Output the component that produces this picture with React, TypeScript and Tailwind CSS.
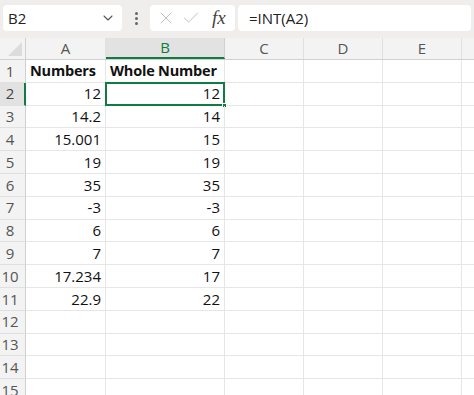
import { ChevronDown, X, Check } from "lucide-react";

const cols = [
  { key: "A", w: "w-[80px]" },
  { key: "B", w: "w-[119px]" },
  { key: "C", w: "w-[79px]" },
  { key: "D", w: "w-[79px]" },
  { key: "E", w: "w-[79px]" },
];

const data: [string, string][] = [
  ["Numbers", "Whole Number"],
  ["12", "12"],
  ["14.2", "14"],
  ["15.001", "15"],
  ["19", "19"],
  ["35", "35"],
  ["-3", "-3"],
  ["6", "6"],
  ["7", "7"],
  ["17.234", "17"],
  ["22.9", "22"],
];

function Toolbar() {
  return (
    <div className="flex h-[38px] items-start gap-[3px] bg-[#efeeed] px-[3px] pt-[5px]">
      <div className="flex h-[26px] w-[119px] items-center justify-between rounded-[4px] bg-white pl-[5px] pr-[6px] text-[15px] text-[#222]">
        <span>B2</span>
        <ChevronDown className="h-4 w-4 text-[#555]" strokeWidth={1.6} />
      </div>
      <div className="flex h-[26px] w-[22px] flex-col items-center justify-center gap-[2px]">
        <span className="h-[3px] w-[3px] rounded-full bg-[#666]" />
        <span className="h-[3px] w-[3px] rounded-full bg-[#666]" />
        <span className="h-[3px] w-[3px] rounded-full bg-[#666]" />
      </div>
      <div className="flex h-[26px] w-[85px] items-center gap-[5px] rounded-[4px] bg-white pl-[6px] text-[#bbb]">
        <X className="h-[20px] w-[20px]" strokeWidth={1.1} />
        <Check className="h-[20px] w-[20px]" strokeWidth={1.1} />
        <span className="ml-[6px] font-['Liberation_Serif',serif] text-[19px] italic text-[#444]">fx</span>
      </div>
      <div className="flex h-[26px] flex-1 items-center rounded-[4px] bg-white pl-[11px] text-[15px] text-[#222]">
        =INT(A2)
      </div>
    </div>
  );
}

export default function App() {
  return (
    <div className="h-[395px] w-[474px] overflow-hidden bg-white font-['Open_Sans',sans-serif]">
      <Toolbar />
      <div className="flex h-[22px] border-b border-[#d0d0d0] bg-[#f3f3f3] text-[15px] text-[#555]">
        <div className="relative w-[26px] shrink-0 border-r border-[#d0d0d0]">
          <div className="absolute bottom-[3px] right-[3px] h-0 w-0 border-b-[14px] border-l-[14px] border-b-[#dcdcdc] border-l-transparent" />
        </div>
        {cols.map((c) =>
          c.key === "B" ? (
            <div
              key={c.key}
              className={`${c.w} flex shrink-0 items-center justify-center border-b-2 border-r border-[#d0d0d0] border-b-[#107c41] bg-[#e2e2e2] text-[#107c41]`}
            >
              {c.key}
            </div>
          ) : (
            <div
              key={c.key}
              className={`${c.w} flex shrink-0 items-center justify-center border-r border-[#e0e0e0]`}
            >
              {c.key}
            </div>
          )
        )}
        <div className="flex-1" />
      </div>
      {Array.from({ length: 15 }, (_, i) => {
        const row = data[i];
        const active = i === 1;
        const head = i === 0;
        return (
          <div key={i} className="flex h-[22.8px] text-[15px] text-[#111]">
            <div
              className={
                active
                  ? "flex w-[26px] shrink-0 items-center justify-center border-b border-r-2 border-[#e0e0e0] border-r-[#107c41] bg-[#e2e2e2] pr-[4px] text-[#444]"
                  : "flex w-[26px] shrink-0 items-center justify-center border-b border-r border-[#e0e0e0] border-r-[#d0d0d0] bg-[#f3f3f3] pr-[5px] text-[#555]"
              }
            >
              {i + 1}
            </div>
            <div
              className={`flex w-[80px] shrink-0 items-center whitespace-nowrap border-b border-r border-[#e6e6e6] px-[4px] ${
                head ? "justify-start text-[14.5px] font-bold tracking-[-0.2px]" : "justify-end"
              }`}
            >
              {row ? row[0] : ""}
            </div>
            <div
              className={`relative flex w-[119px] shrink-0 items-center whitespace-nowrap border-b border-r border-[#e6e6e6] px-[4px] ${
                head ? "justify-start text-[14.5px] font-bold tracking-[-0.2px]" : "justify-end"
              }`}
            >
              {row ? row[1] : ""}
              {active && (
                <>
                  <div className="absolute inset-[-1px] border-2 border-[#107c41]" />
                  <div className="absolute bottom-[-3px] right-[-3px] h-[5px] w-[5px] border border-white bg-[#107c41]" />
                </>
              )}
            </div>
            <div className="w-[79px] shrink-0 border-b border-r border-[#e6e6e6]" />
            <div className="w-[79px] shrink-0 border-b border-r border-[#e6e6e6]" />
            <div className="w-[79px] shrink-0 border-b border-r border-[#e6e6e6]" />
            <div className="flex-1 border-b border-[#e6e6e6]" />
          </div>
        );
      })}
    </div>
  );
}
